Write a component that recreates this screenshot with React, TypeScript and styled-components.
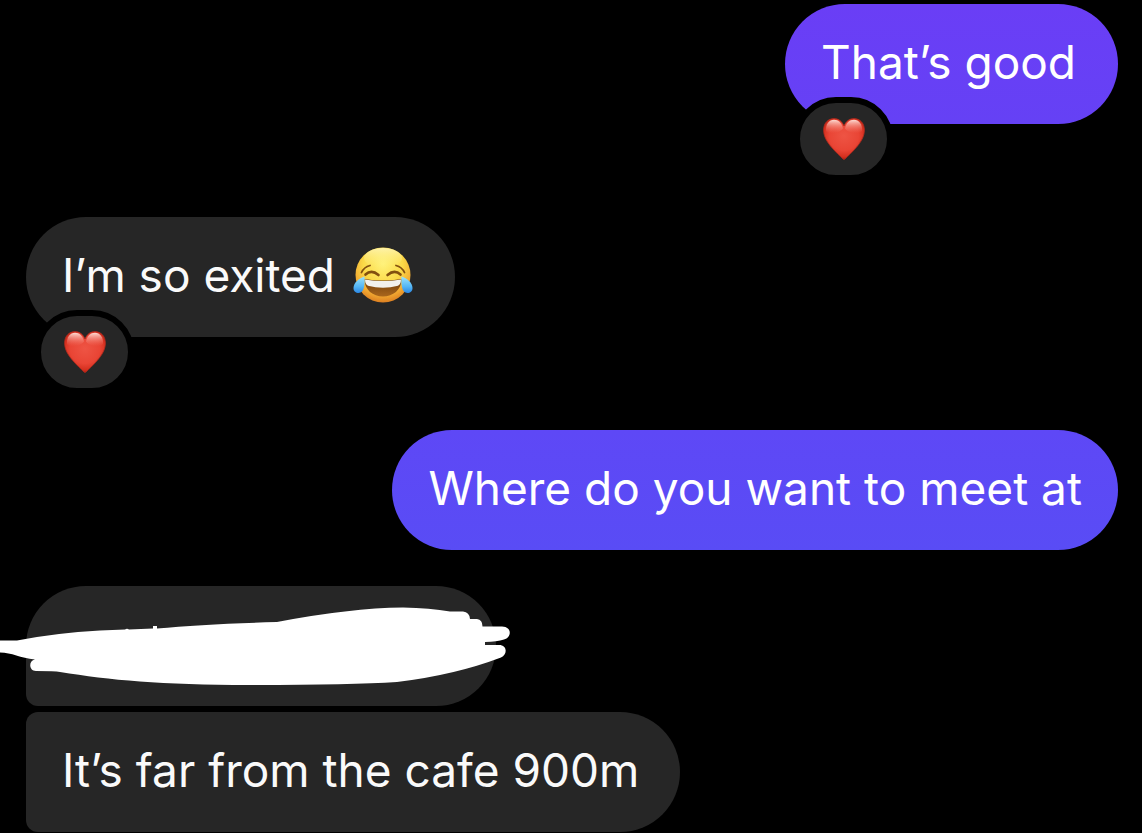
import React from "react";
import styled, { createGlobalStyle } from "styled-components";

const GlobalStyle = createGlobalStyle`
  body {
    margin: 0;
    background: #000;
    font-family: Inter, "Liberation Sans", sans-serif;
    overflow-x: hidden;
  }
`;

const Thread = styled.main`
  display: flex;
  flex-direction: column;
  padding: 4px 24px 0 26px;
`;

const Message = styled.article<{ $own?: boolean; $gap: number }>`
  position: relative;
  align-self: ${(p) => (p.$own ? "flex-end" : "flex-start")};
  margin-bottom: ${(p) => p.$gap}px;
`;

const Bubble = styled.p<{ $fill?: string; $radius?: string; $min?: number }>`
  display: flex;
  align-items: center;
  gap: 18px;
  box-sizing: border-box;
  min-width: ${(p) => p.$min ?? 0}px;
  min-height: 120px;
  margin: 0;
  padding: 29px 36px 33px;
  border-radius: ${(p) => p.$radius ?? "60px"};
  background: ${(p) => p.$fill ?? "#262626"};
  color: ${(p) => (p.$fill ? "#fff" : "#fafafa")};
  font-size: 46px;
  line-height: 58px;
`;

const Reaction = styled.button`
  position: absolute;
  left: 9px;
  bottom: -57px;
  display: flex;
  align-items: center;
  justify-content: center;
  box-sizing: border-box;
  width: 99px;
  height: 84px;
  padding: 0;
  border: 6px solid #000;
  border-radius: 42px;
  background: #262626;
`;

const Scribble = styled.svg`
  position: absolute;
  left: -26px;
  top: 14px;
`;

const Heart = ({ id }: { id: string }) => (
  <svg width="42" height="42" viewBox="0 0 42 42" aria-hidden="true">
    <defs>
      <radialGradient id={`${id}-body`} cx="0.5" cy="0.42" r="0.6">
        <stop offset="0" stopColor="#ee5444" />
        <stop offset="0.6" stopColor="#e94535" />
        <stop offset="0.85" stopColor="#d5301f" />
        <stop offset="1" stopColor="#a81c10" />
      </radialGradient>
      <linearGradient id={`${id}-shine`} x1="0" y1="0" x2="0" y2="1">
        <stop offset="0" stopColor="#ffe4dc" stopOpacity="0.95" />
        <stop offset="1" stopColor="#f47a6c" stopOpacity="0" />
      </linearGradient>
    </defs>
    <path
      d="M21 8C19 3.3 15.5 .6 11.2.6 5 .6.6 5.200.6 12c0 6.500 3.400 12 8.400 17.800C12.500 34 17 38 20.100 41.100q.9.8 1.800 0C25 38 29.500 34 33 29.800 38 24 41.400 18.500 41.400 12 41.400 5.200 37 .6 30.800.6 26.500.6 23 3.300 21 8Z"
      fill={`url(#${id}-body)`}
      stroke="#b32a1d"
      strokeWidth="0.8"
    />
    <path d="M3 13C2.500 6 6.200 1.800 11 1.800c4.500 0 7.800 3 9 8.700C17 15 6 17 3 13Z" fill={`url(#${id}-shine)`} />
    <path d="M39 13C39.500 6 35.800 1.800 31 1.800c-4.500 0-7.800 3-9 8.700C25 15 36 17 39 13Z" fill={`url(#${id}-shine)`} />
  </svg>
);

const JoyFace = () => (
  <svg width="60" height="58" viewBox="0 0 60 58" role="img" aria-label="Face with tears of joy">
    <defs>
      <radialGradient id="joy-face" cx="0.5" cy="0.3" r="0.72">
        <stop offset="0" stopColor="#fff27a" />
        <stop offset="0.5" stopColor="#fbd947" />
        <stop offset="0.78" stopColor="#f2aa32" />
        <stop offset="1" stopColor="#d9791f" />
      </radialGradient>
      <linearGradient id="joy-shine" x1="0" y1="0" x2="0" y2="1">
        <stop offset="0" stopColor="#fffbd0" stopOpacity="0.7" />
        <stop offset="1" stopColor="#fff27a" stopOpacity="0" />
      </linearGradient>
      <linearGradient id="joy-mouth" x1="0" y1="0" x2="0" y2="1">
        <stop offset="0" stopColor="#6d3b0c" />
        <stop offset="1" stopColor="#a9661c" />
      </linearGradient>
      <linearGradient id="joy-tear" x1="0" y1="0" x2="0" y2="1">
        <stop offset="0" stopColor="#9be3fb" />
        <stop offset="0.6" stopColor="#55b7f6" />
        <stop offset="1" stopColor="#2b87e4" />
      </linearGradient>
    </defs>
    <circle cx="30" cy="29" r="27.500" fill="url(#joy-face)" />
    <ellipse cx="30" cy="12" rx="19" ry="10" fill="url(#joy-shine)" />
    <g fill="none" stroke="#83500f" strokeLinecap="round">
      <path d="M8.500 26.500q2.500-5.500 8.500-7M51.500 26.500q-2.500-5.500-8.500-7" strokeWidth="1.800" />
      <path d="M12.500 28.500q6-5.500 13 .5M47.500 28.500q-6-5.500-13 .5" strokeWidth="2.600" />
    </g>
    <path d="M11.500 33Q30 36 48.500 33C48.500 44 40 50.500 30 50.500S11.500 44 11.500 33Z" fill="url(#joy-mouth)" />
    <path d="M12 33.500Q30 36.500 48 33.500q0 5-3 6.200-15 4-30 0-3-1.200-3-6.200Z" fill="#f2f1ee" />
    <path d="M11.500 30.500C6 32 .5 37 .5 42c0 3.200 2.300 5 5 5 6 0 6.500-9.500 6-16.500Z" fill="url(#joy-tear)" />
    <path d="M48.500 30.500C54 32 59.500 37 59.500 42c0 3.200-2.300 5-5 5-6 0-6.500-9.500-6-16.500Z" fill="url(#joy-tear)" />
  </svg>
);

export default function App() {
  return (
    <>
      <GlobalStyle />
      <Thread>
        <Message $own $gap={93}>
          <Bubble $fill="linear-gradient(#6a3ef6, #6541f5)" $min={333}>
            That’s good
          </Bubble>
          <Reaction type="button" aria-label="Heart reaction">
            <Heart id="heart-a" />
          </Reaction>
        </Message>
        <Message $gap={93}>
          <Bubble $min={429}>
            I’m so exited
            <JoyFace />
          </Bubble>
          <Reaction type="button" aria-label="Heart reaction">
            <Heart id="heart-b" />
          </Reaction>
        </Message>
        <Message $own $gap={36}>
          <Bubble $fill="linear-gradient(#5e48f6, #594cf5)">Where do you want to meet at</Bubble>
        </Message>
        <Message $gap={6}>
          <Bubble $radius="60px 60px 60px 12px" $min={470} />
          <Scribble width="512" height="90" viewBox="0 600 512 90" aria-hidden="true">
            <path
              fill="#fff"
              d="M0 640.500H17Q55 633 100 630.500L125 629.500q2-1.500 4 0L153 628.500V626h4v2.500Q205 624 277 622 350 608 403 607.500 430 608 450 611.500H463q6.500.5 7 7.500h7q5.500.5 5.500 7.500H502c10 0 10 11 2 13Q497 641.500 485 642V645H499c8 0 9 9 2 12.500Q455 675 397 682 350 685 250 685C160 685 110 680 60 672Q55 671 36 671C28.500 671 28.500 660.500 35 659.500 20 658 12 652.500 0 652.500Z"
            />
          </Scribble>
        </Message>
        <Message $gap={1}>
          <Bubble $radius="12px 60px 60px 12px" $min={654}>
            It’s far from the cafe 900m
          </Bubble>
        </Message>
      </Thread>
    </>
  );
}
